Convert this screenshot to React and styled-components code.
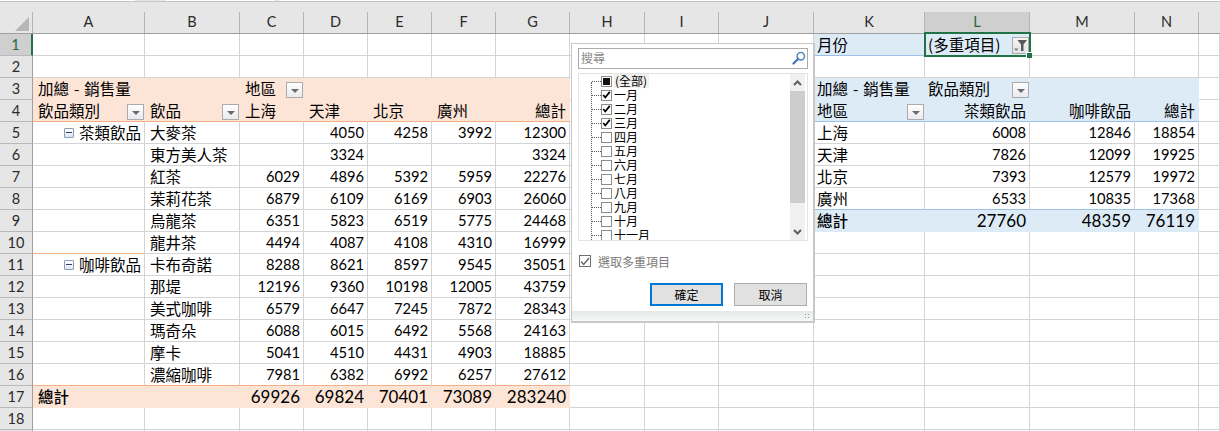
import React from "react";
import styled, { createGlobalStyle } from "styled-components";

const COLS = [
  ["A", 112], ["B", 95], ["C", 64], ["D", 64], ["E", 64], ["F", 64], ["G", 74],
  ["H", 75], ["I", 74], ["J", 95], ["K", 111], ["L", 105], ["M", 105], ["N", 64], ["", 21],
];
const TEMPLATE = `33px ${COLS.map((c) => c[1] + "px").join(" ")}`;
const CJK = `"Noto Sans CJK TC", "Noto Sans CJK SC", sans-serif`;
const NUM = `Lato, "Noto Sans CJK TC", sans-serif`;

const Global = createGlobalStyle`
  html, body { margin: 0; padding: 0; background: #fff; overflow: hidden; }
  #root { width: 1220px; height: 431px; overflow: hidden; }
`;

const Page = styled.div`
  position: relative;
  width: 1220px;
  height: 431px;
  overflow: hidden;
  background: #fff;
  font-family: ${CJK};
  color: #000;
`;

const TopStrip = styled.div`
  height: 12px;
  background: #e6e6e6;
  display: flex;
  align-items: flex-start;
`;

const TopSegment = styled.div`
  flex: ${(p) => (p.$w ? `0 0 ${p.$w}px` : "1")};
  height: 1px;
  box-sizing: content-box;
  background: ${(p) => (p.$gap ? "#e6e6e6" : "#fff")};
  border-bottom: 1px solid #c4c4c4;
`;

const HeaderRow = styled.div`
  display: grid;
  grid-template-columns: ${TEMPLATE};
  height: 22px;
  box-sizing: border-box;
  border-bottom: 1px solid #9f9f9f;
  background: #e6e6e6;
`;

const Corner = styled.div`
  border-right: 1px solid #b5b5b5;
  position: relative;
  &::after {
    content: "";
    position: absolute;
    right: 3px;
    bottom: 2px;
    width: 0;
    height: 0;
    border-left: 14px solid transparent;
    border-bottom: 14px solid #b7b7b7;
  }
`;

const ColHead = styled.div`
  display: flex;
  align-items: center;
  justify-content: center;
  font-family: ${NUM};
  font-size: 14.5px;
  line-height: 1;
  box-sizing: border-box;
  border-right: 1px solid ${(p) => (p.$last ? "transparent" : "#b5b5b5")};
  background: ${(p) => (p.$active ? "#cfcfcf" : "#e6e6e6")};
  color: ${(p) => (p.$active ? "#1e6b41" : "#2b2b2b")};
`;

const Row = styled.div`
  display: grid;
  grid-template-columns: ${TEMPLATE};
  height: 22px;
`;

const RowHead = styled.div`
  display: flex;
  align-items: center;
  justify-content: center;
  box-sizing: border-box;
  font-family: ${NUM};
  font-size: 14.5px;
  line-height: 1;
  padding-top: 1px;
  background: ${(p) => (p.$active ? "#cfcfcf" : "#e6e6e6")};
  color: ${(p) => (p.$active ? "#1e6b41" : "#2b2b2b")};
  border-right: ${(p) => (p.$active ? "2px solid #217346" : "1px solid #9f9f9f")};
  border-bottom: 1px solid #b9b9b9;
`;

const THEMES = {
  none: { bg: "#fff", right: "#d4d4d4", bottom: "#d4d4d4" },
  orange: { bg: "#fce4d6", right: "#fce4d6", bottom: "#fce4d6" },
  orangeEdge: { bg: "#fce4d6", right: "#fce4d6", bottom: "#f4b084" },
  blue: { bg: "#ddebf7", right: "#ddebf7", bottom: "#ddebf7" },
  blueEdge: { bg: "#ddebf7", right: "#ddebf7", bottom: "#9bc2e6" },
  orangeLine: { bg: "#fff", right: "#d4d4d4", bottom: "#f4b084" },
  blueLine: { bg: "#fff", right: "#d4d4d4", bottom: "#9bc2e6" },
};

const Cell = styled.div`
  position: relative;
  min-width: 0;
  display: flex;
  align-items: center;
  justify-content: ${(p) => (p.$right ? "flex-end" : "flex-start")};
  box-sizing: border-box;
  padding: ${(p) => (p.$right ? "0 3px 0 0" : p.$tight ? "0 0 0 3px" : "0 0 0 5px")};
  white-space: nowrap;
  font-family: ${(p) => (p.$num ? NUM : CJK)};
  font-size: ${(p) => (p.$num ? (p.$total ? "17px" : "14.7px") : "15.5px")};
  line-height: 1;
  background: ${(p) => THEMES[p.$theme].bg};
  border-right: 1px solid ${(p) => THEMES[p.$theme].right};
  border-bottom: 1px solid ${(p) => THEMES[p.$theme].bottom};
`;

const Label = styled.span`
  font-weight: ${(p) => (p.$strong ? 500 : 400)};
  word-spacing: ${(p) => (p.$spaced ? "1.5px" : "0")};
`;

const DropBtn = styled.span`
  position: absolute;
  right: 0;
  top: 4px;
  width: 17px;
  height: 16px;
  box-sizing: border-box;
  border: 1px solid #ababab;
  background: linear-gradient(#ffffff, #e9eaee);
  display: flex;
  align-items: center;
  justify-content: center;
  &::after {
    content: "";
    width: 0;
    height: 0;
    border-left: 4px solid transparent;
    border-right: 4px solid transparent;
    border-top: 4px solid #6b6b6b;
    margin-top: 1px;
  }
`;

const FilterBtn = styled.span`
  position: absolute;
  right: 0;
  top: 3px;
  width: 17px;
  height: 17px;
  box-sizing: border-box;
  border: 1px solid #ababab;
  background: linear-gradient(#f4f4f4, #e2e3e6);
  display: flex;
  align-items: center;
  justify-content: center;
`;

const Tree = styled.span`
  display: inline-flex;
  align-items: center;
  gap: 5px;
  margin-left: auto;
  margin-right: 3px;
`;

const Minus = styled.span`
  width: 10px;
  height: 10px;
  box-sizing: border-box;
  border: 1px solid #8a9bbb;
  border-radius: 1px;
  background: linear-gradient(#ffffff, #dfe6f2);
  display: flex;
  align-items: center;
  justify-content: center;
  &::after {
    content: "";
    width: 6px;
    height: 1px;
    background: #36425a;
  }
`;

const Selection = styled.div`
  position: absolute;
  left: 924px;
  top: 32px;
  width: 107px;
  height: 25px;
  box-sizing: border-box;
  border: 2px solid #217346;
  pointer-events: none;
  &::after {
    content: "";
    position: absolute;
    right: -3px;
    bottom: -3px;
    width: 5px;
    height: 5px;
    background: #217346;
    border-left: 1px solid #fff;
    border-top: 1px solid #fff;
  }
`;

/* ---- filter popup ---- */
const Popup = styled.div`
  position: absolute;
  left: 571px;
  top: 43px;
  width: 244px;
  height: 280px;
  box-sizing: border-box;
  border-style: solid;
  border-color: #c8c8c8;
  border-width: 1px 2px 2px 1px;
  background: #fff;
  display: flex;
  flex-direction: column;
  padding: 4px 0 0;
  font-size: 12px;
`;

const Search = styled.div`
  margin: 0 5px 0 6px;
  height: 21px;
  box-sizing: border-box;
  border: 1px solid #ababab;
  display: flex;
  align-items: center;
  justify-content: space-between;
  padding: 0 1px 2px 2px;
  color: #8a8a8a;
  font-size: 12px;
`;

const TreeBox = styled.div`
  position: relative;
  margin: 4px 5px 0 6px;
  height: 168px;
  box-sizing: border-box;
  border: 1px solid #e3e3e3;
  overflow: hidden;
  display: flex;
`;

const TreeList = styled.div`
  flex: 1;
  padding: 0 0 0 13px;
  position: relative;
`;

const Dotted = styled.div`
  position: absolute;
  left: 12px;
  top: 8px;
  bottom: 0;
  border-left: 1px dotted #555;
`;

const TreeItem = styled.div`
  position: relative;
  display: flex;
  align-items: center;
  height: 14px;
  padding-left: 9px;
  color: #000;
  line-height: 1;
  &::before {
    content: "";
    position: absolute;
    left: 0;
    top: 7px;
    width: 9px;
    border-top: 1px dotted #555;
  }
`;

const Box = styled.span`
  width: 11px;
  height: 11px;
  flex: none;
  box-sizing: border-box;
  border: 1px solid #8c8c8c;
  background: #fff;
  display: flex;
  align-items: center;
  justify-content: center;
  margin-right: 2px;
`;

const Mixed = styled.span`
  width: 7px;
  height: 7px;
  background: #111;
`;

const ItemText = styled.span`
  padding: 0 2px 0 ${(p) => (p.$all ? "1px" : "0")};
  background: ${(p) => (p.$all ? "#f0f0f0" : "transparent")};
  height: 14px;
  display: flex;
  align-items: center;
`;

const ScrollBar = styled.div`
  width: 15px;
  margin: 0 2px 0 0;
  background: #f0f0f0;
  display: flex;
  flex-direction: column;
`;

const ScrollArrow = styled.div`
  height: ${(p) => (p.$down ? 16 : 17)}px;
  display: flex;
  align-items: center;
  justify-content: center;
  flex: none;
`;

const ScrollThumb = styled.div`
  height: 112px;
  background: #cdcdcd;
`;

const ScrollGap = styled.div`
  flex: 1;
`;

const Multi = styled.div`
  display: flex;
  align-items: center;
  gap: 7px;
  margin: 13px 0 0 7px;
  color: #7c7c7c;
  font-size: 12px;
  height: 14px;
`;

const MultiBox = styled.span`
  width: 12px;
  height: 12px;
  box-sizing: border-box;
  border: 1px solid #6f6f6f;
  display: flex;
  align-items: center;
  justify-content: center;
`;

const Buttons = styled.div`
  display: flex;
  justify-content: flex-end;
  gap: 11px;
  margin: 15px 6px 0 0;
`;

const Btn = styled.div`
  width: 73px;
  height: 23px;
  box-sizing: border-box;
  background: #e1e1e1;
  border: ${(p) => (p.$primary ? "2px solid #0078d7" : "1px solid #adadad")};
  display: flex;
  align-items: center;
  justify-content: center;
  font-size: 12px;
  color: #000;
`;

const Footer = styled.div`
  position: relative;
  margin-top: auto;
  height: 10px;
  background: linear-gradient(#e6e8e8, #f7f8f8);
  &::after {
    content: "";
    position: absolute;
    right: 3px;
    bottom: 2px;
    width: 6px;
    height: 6px;
    background: radial-gradient(circle, #9a9a9a 1px, transparent 1px) 0 0 / 3px 3px;
  }
`;

/* ---- data ---- */
const tea = [
  ["大麥茶", "", "4050", "4258", "3992", "12300"],
  ["東方美人茶", "", "3324", "", "", "3324"],
  ["紅茶", "6029", "4896", "5392", "5959", "22276"],
  ["茉莉花茶", "6879", "6109", "6169", "6903", "26060"],
  ["烏龍茶", "6351", "5823", "6519", "5775", "24468"],
  ["龍井茶", "4494", "4087", "4108", "4310", "16999"],
];
const coffee = [
  ["卡布奇諾", "8288", "8621", "8597", "9545", "35051"],
  ["那堤", "12196", "9360", "10198", "12005", "43759"],
  ["美式咖啡", "6579", "6647", "7245", "7872", "28343"],
  ["瑪奇朵", "6088", "6015", "6492", "5568", "24163"],
  ["摩卡", "5041", "4510", "4431", "4903", "18885"],
  ["濃縮咖啡", "7981", "6382", "6992", "6257", "27612"],
];
const side = [
  ["上海", "6008", "12846", "18854"],
  ["天津", "7826", "12099", "19925"],
  ["北京", "7393", "12579", "19972"],
  ["廣州", "6533", "10835", "17368"],
];
const months = ["一月", "二月", "三月", "四月", "五月", "六月", "七月", "八月", "九月", "十月", "十一月"];

const Num = ({ t = "none", total, children }) => (
  <Cell $theme={t} $num $right $total={total}>{children}</Cell>
);
const TextRight = ({ t = "none", children }) => <Cell $theme={t} $right>{children}</Cell>;
const Blanks = ({ n, t = "none" }) => Array.from({ length: n }, (_, i) => <Cell key={i} $theme={t} />);

const Check = () => (
  <svg width="11" height="10" viewBox="0 0 11 10">
    <path d="M1.5 5 L4 8 L9.5 1.2" fill="none" stroke="#000" strokeWidth="2.2" />
  </svg>
);
const Chevron = ({ down }) => (
  <svg width="9" height="6" viewBox="0 0 9 6">
    <path d={down ? "M1 1 L4.5 4.5 L8 1" : "M1 5 L4.5 1.5 L8 5"} fill="none" stroke="#5f5f5f" strokeWidth="2" />
  </svg>
);

export default function App() {
  const dataRows = [...tea, ...coffee];
  return (
    <Page>
      <Global />
      <TopStrip>
        <TopSegment $w={135} />
        <TopSegment $w={31} $gap />
        <TopSegment $w={109} />
        <TopSegment $w={4} $gap />
        <TopSegment />
      </TopStrip>
      <HeaderRow>
        <Corner />
        {COLS.map(([c], i) => (
          <ColHead key={i} $active={c === "L"} $last={!c}>{c}</ColHead>
        ))}
      </HeaderRow>

      <Row>
        <RowHead $active>1</RowHead>
        <Blanks n={10} />
        <Cell $theme="blueEdge" $tight>月份</Cell>
        <Cell $theme="blueEdge" $tight>
          (多重項目)
          <FilterBtn>
            <svg width="15" height="15" viewBox="0 0 15 15">
              <path d="M4.5 2 H14 L10.5 6.5 V13 H8 V6.5 Z" fill="#5a5a5a" />
              <path d="M1 10.5 H5.5 L3.2 13 Z" fill="#777" />
            </svg>
          </FilterBtn>
        </Cell>
        <Blanks n={3} />
      </Row>

      <Row>
        <RowHead>2</RowHead>
        <Blanks n={15} />
      </Row>

      <Row>
        <RowHead>3</RowHead>
        <Cell $theme="orange"><Label $spaced>加總 - 銷售量</Label></Cell>
        <Cell $theme="orange" />
        <Cell $theme="orange">地區<DropBtn /></Cell>
        <Blanks n={4} t="orange" />
        <Blanks n={3} />
        <Cell $theme="blue" $tight><Label $spaced>加總 - 銷售量</Label></Cell>
        <Cell $theme="blue" $tight>飲品類別<DropBtn /></Cell>
        <Blanks n={2} t="blue" />
        <Cell $theme="none" />
      </Row>

      <Row>
        <RowHead>4</RowHead>
        <Cell $theme="orangeEdge">飲品類別<DropBtn /></Cell>
        <Cell $theme="orangeEdge">飲品<DropBtn /></Cell>
        <Cell $theme="orangeEdge">上海</Cell>
        <Cell $theme="orangeEdge">天津</Cell>
        <Cell $theme="orangeEdge">北京</Cell>
        <Cell $theme="orangeEdge">廣州</Cell>
        <TextRight t="orangeEdge">總計</TextRight>
        <Blanks n={3} />
        <Cell $theme="blueEdge" $tight>地區<DropBtn /></Cell>
        <TextRight t="blueEdge">茶類飲品</TextRight>
        <TextRight t="blueEdge">咖啡飲品</TextRight>
        <TextRight t="blueEdge">總計</TextRight>
        <Cell $theme="none" />
      </Row>

      {dataRows.map((r, i) => {
        const s = side[i];
        const isLast = i === dataRows.length - 1;
        const aTheme = i === 5 || isLast ? "orangeLine" : "none";
        const rowTheme = isLast ? "orangeLine" : "none";
        const sideTheme = i === 3 ? "blueLine" : "none";
        return (
          <Row key={i}>
            <RowHead>{i + 5}</RowHead>
            <Cell $theme={aTheme}>
              {(i === 0 || i === 6) && (
                <Tree><Minus />{i === 0 ? "茶類飲品" : "咖啡飲品"}</Tree>
              )}
            </Cell>
            <Cell $theme={rowTheme}>{r[0]}</Cell>
            {r.slice(1).map((v, j) => (
              <Num key={j} t={rowTheme}>{v}</Num>
            ))}
            <Blanks n={3} />
            {s ? (
              <>
                <Cell $theme={sideTheme} $tight>{s[0]}</Cell>
                <Num t={sideTheme}>{s[1]}</Num>
                <Num t={sideTheme}>{s[2]}</Num>
                <Num t={sideTheme}>{s[3]}</Num>
              </>
            ) : i === 4 ? (
              <>
                <Cell $theme="blue" $tight><Label $strong>總計</Label></Cell>
                <Num t="blue" total>27760</Num>
                <Num t="blue" total>48359</Num>
                <Num t="blue" total>76119</Num>
              </>
            ) : (
              <Blanks n={4} />
            )}
            <Cell $theme="none" />
          </Row>
        );
      })}

      <Row>
        <RowHead>17</RowHead>
        <Cell $theme="orange"><Label $strong>總計</Label></Cell>
        <Cell $theme="orange" />
        {["69926", "69824", "70401", "73089", "283240"].map((v) => (
          <Num key={v} t="orange" total>{v}</Num>
        ))}
        <Blanks n={8} />
      </Row>
      <Row>
        <RowHead>18</RowHead>
        <Blanks n={15} />
      </Row>
      <Row>
        <RowHead />
        <Blanks n={15} />
      </Row>

      <Selection />

      <Popup>
        <Search>
          <span>搜尋</span>
          <svg width="14" height="14" viewBox="0 0 14 14">
            <circle cx="8.8" cy="5.2" r="3.7" fill="none" stroke="#5b8bbd" strokeWidth="1.6" />
            <path d="M6 8 L1.5 12.5" stroke="#3f75ad" strokeWidth="2.2" strokeLinecap="round" />
          </svg>
        </Search>
        <TreeBox>
          <TreeList>
            <Dotted />
            <TreeItem>
              <Box><Mixed /></Box>
              <ItemText $all>(全部)</ItemText>
            </TreeItem>
            {months.map((m, i) => (
              <TreeItem key={m}>
                <Box>{i < 3 && <Check />}</Box>
                <ItemText>{m}</ItemText>
              </TreeItem>
            ))}
          </TreeList>
          <ScrollBar>
            <ScrollArrow><Chevron /></ScrollArrow>
            <ScrollThumb />
            <ScrollGap />
            <ScrollArrow $down><Chevron down /></ScrollArrow>
          </ScrollBar>
        </TreeBox>
        <Multi>
          <MultiBox>
            <svg width="10" height="9" viewBox="0 0 10 9">
              <path d="M1 4.5 L3.7 7.5 L9 1" fill="none" stroke="#666" strokeWidth="1.4" />
            </svg>
          </MultiBox>
          選取多重項目
        </Multi>
        <Buttons>
          <Btn $primary>確定</Btn>
          <Btn>取消</Btn>
        </Buttons>
        <Footer />
      </Popup>
    </Page>
  );
}
